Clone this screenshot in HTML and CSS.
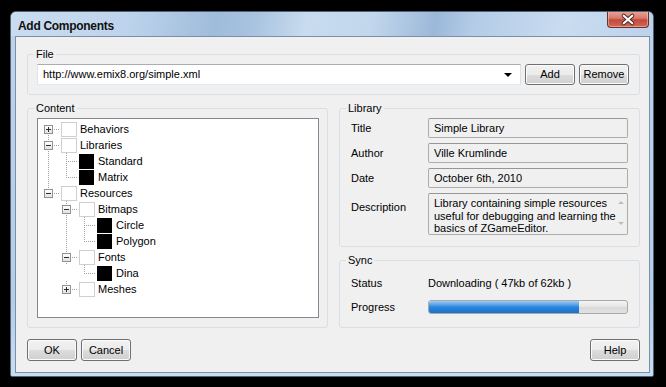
FILE: index.html
```html
<!DOCTYPE html>
<html lang="en">
<head>
    <meta charset="UTF-8">
    <title>Add Components</title>
    <link rel="stylesheet" href="styles.css">
</head>
<body>

    <div class="window">
        <div class="titlebar">
            <span class="title">Add Components</span>
            <button class="close" title="Close">
                <svg width="42" height="17" viewBox="0 0 42 17">
                    <path d="M16.5 4.5 L25.5 12.5 M25.5 4.5 L16.5 12.5" stroke="#4a2a28" stroke-width="4.2" stroke-linecap="round"/>
                    <path d="M16.5 4.5 L25.5 12.5 M25.5 4.5 L16.5 12.5" stroke="#ffffff" stroke-width="2.2" stroke-linecap="round"/>
                </svg>
            </button>
        </div>

        <div class="client">
            <fieldset class="group">
                <legend>File</legend>
                <div class="file-row">
                    <div class="combo">
                        <span class="combo-text">http://www.emix8.org/simple.xml</span>
                        <span class="combo-arrow"></span>
                    </div>
                    <button class="btn">Add</button>
                    <button class="btn">Remove</button>
                </div>
            </fieldset>

            <div class="columns">
                <fieldset class="group">
                    <legend>Content</legend>
                    <div class="content-body">
                        <div class="tree">
                            <div class="node"><span class="ln ln-f"><i class="exp plus"></i></span><span class="icon empty"></span><span class="label">Behaviors</span></div>
                            <div class="node"><span class="ln ln-t"><i class="exp"></i></span><span class="icon empty"></span><span class="label">Libraries</span></div>
                            <div class="node"><span class="ind ln-v"></span><span class="ln ln-t"></span><span class="icon filled"></span><span class="label">Standard</span></div>
                            <div class="node"><span class="ind ln-v"></span><span class="ln ln-l"></span><span class="icon filled"></span><span class="label">Matrix</span></div>
                            <div class="node"><span class="ln ln-l"><i class="exp"></i></span><span class="icon empty"></span><span class="label">Resources</span></div>
                            <div class="node"><span class="ind"></span><span class="ln ln-t"><i class="exp"></i></span><span class="icon empty"></span><span class="label">Bitmaps</span></div>
                            <div class="node"><span class="ind"></span><span class="ind ln-v"></span><span class="ln ln-t"></span><span class="icon filled"></span><span class="label">Circle</span></div>
                            <div class="node"><span class="ind"></span><span class="ind ln-v"></span><span class="ln ln-l"></span><span class="icon filled"></span><span class="label">Polygon</span></div>
                            <div class="node"><span class="ind"></span><span class="ln ln-t"><i class="exp"></i></span><span class="icon empty"></span><span class="label">Fonts</span></div>
                            <div class="node"><span class="ind"></span><span class="ind"></span><span class="ln ln-l"></span><span class="icon filled"></span><span class="label">Dina</span></div>
                            <div class="node"><span class="ind"></span><span class="ln ln-l"><i class="exp plus"></i></span><span class="icon empty"></span><span class="label">Meshes</span></div>
                        </div>
                    </div>
                </fieldset>

                <div class="side">
                    <fieldset class="group">
                        <legend>Library</legend>
                        <div class="props library-props">
                            <span class="prop-name">Title</span>
                            <span class="field">Simple Library</span>
                            <span class="prop-name">Author</span>
                            <span class="field">Ville Krumlinde</span>
                            <span class="prop-name">Date</span>
                            <span class="field">October 6th, 2010</span>
                            <span class="prop-name top">Description</span>
                            <div class="field memo">
                                <span class="memo-text">Library containing simple resources<br>useful for debugging and learning the<br>basics of ZGameEditor.</span>
                                <span class="scroll">
                                    <span class="arrow up"></span>
                                    <span class="arrow down"></span>
                                </span>
                            </div>
                        </div>
                    </fieldset>

                    <fieldset class="group">
                        <legend>Sync</legend>
                        <div class="props sync-props">
                            <span class="prop-name">Status</span>
                            <span class="value">Downloading ( 47kb of 62kb )</span>
                            <span class="prop-name">Progress</span>
                            <div class="progress"><div class="progress-fill" style="width: 75.8%"></div></div>
                        </div>
                    </fieldset>
                </div>
            </div>

            <div class="actions">
                <button class="btn">OK</button>
                <button class="btn">Cancel</button>
                <button class="btn help">Help</button>
            </div>
        </div>
    </div>

</body>
</html>
```

FILE: styles.css
```css
/* Janela estilo Vista basic */
body {
    margin: 0;
    background: #000;
    font-family: "Liberation Sans", Arial, sans-serif;
    font-size: 11px;
    line-height: 13px;
    color: #000;
}
.window {
    width: 644px;
    height: 366px;
    margin: 11px 0 0 10px;
    box-sizing: border-box;
    border: 1px solid #4f6276;
    border-radius: 6px 6px 2px 2px;
    background: linear-gradient(to bottom, #bcd3ec, #b4cde9 80%, #c6ddf2);
    display: flex;
    flex-direction: column;
    overflow: hidden;
}
.titlebar {
    height: 24px;
    flex: none;
    display: flex;
    align-items: flex-start;
    justify-content: space-between;
    background: linear-gradient(100deg, #cadcf0 0%, #bed4ec 18%, #9fbcdb 32%, #a9c3e0 38%, #c8dbef 46%, #c2d7ed 56%, #9cb8d9 66%, #b4cce7 72%, #c9dcf0 86%, #bcd2eb 100%);
}
.title {
    font-weight: bold;
    font-size: 12px;
    line-height: 14px;
    margin: 7px 0 0 7px;
    color: #111;
    letter-spacing: -0.3px;
}
.close {
    width: 42px;
    height: 17px;
    margin: -1px 4px 0 0;
    padding: 0;
    border: 1px solid #6d2f29;
    border-top: none;
    border-radius: 0 0 4px 4px;
    background: linear-gradient(to bottom, #e8a79b 0%, #d77a6b 45%, #c24a3b 55%, #cf6a56 100%);
    box-shadow: inset 0 0 0 1px rgba(255, 220, 210, 0.45);
    display: flex;
    align-items: center;
    justify-content: center;
}
.close svg { display: block; }

.client {
    flex: 1;
    margin: 0 3px 3px 4px;
    border: 1px solid #7c8fa6;
    background: #f0f0f0;
    padding: 11px 9px 10px 11px;
    display: flex;
    flex-direction: column;
}

/* group boxes */
.group {
    margin: 0;
    padding: 0;
    min-width: 0;
    border: 1px solid #d5dfe5;
    border-radius: 3px;
}
.group legend {
    margin-left: 6px;
    padding: 0 2px;
    line-height: 13px;
}

.file-row {
    display: flex;
    gap: 4px;
    padding: 3px 10px 9px 9px;
}
.combo {
    flex: 1;
    height: 21px;
    box-sizing: border-box;
    border: 1px solid #abadb3;
    border-color: #abadb3 #dbdfe6 #e3e9ef #e2e3ea;
    background: #fff;
    display: flex;
    align-items: center;
    padding: 0 8px 0 5px;
}
.combo-text { flex: 1; }
.combo-arrow {
    width: 0;
    height: 0;
    border-left: 4px solid transparent;
    border-right: 4px solid transparent;
    border-top: 4px solid #000;
}

.btn {
    width: 50px;
    height: 21px;
    padding: 0;
    font: inherit;
    color: #000;
    border: 1px solid #707070;
    border-radius: 3px;
    background: linear-gradient(to bottom, #f2f2f2 0%, #ebebeb 50%, #dddddd 50%, #cfcfcf 100%);
    box-shadow: inset 0 0 0 1px #fbfbfb;
}

.columns {
    display: grid;
    grid-template-columns: 1fr 1fr;
    column-gap: 11px;
    margin-top: 7px;
}
.content-body {
    padding: 3px 8px 9px 9px;
}
.tree {
    height: 200px;
    box-sizing: border-box;
    border: 1px solid #828790;
    background: #fff;
    padding-top: 2px;
}
.node {
    display: flex;
    align-items: center;
    height: 16px;
    padding-left: 1px;
}
.ind, .ln {
    flex: none;
    height: 16px;
    display: flex;
    align-items: center;
}
.ind { width: 18px; }
.ln { width: 22px; }

/* linhas pontilhadas da arvore */
.ln-v {
    background: repeating-linear-gradient(to bottom, #a0a0a0 0 1px, transparent 1px 2px) 9px 0 / 1px 100% no-repeat;
}
.ln-t {
    background:
        repeating-linear-gradient(to right, #a0a0a0 0 1px, transparent 1px 2px) 11px 8px / 10px 1px no-repeat,
        repeating-linear-gradient(to bottom, #a0a0a0 0 1px, transparent 1px 2px) 9px 0 / 1px 100% no-repeat;
}
.ln-l {
    background:
        repeating-linear-gradient(to right, #a0a0a0 0 1px, transparent 1px 2px) 11px 8px / 10px 1px no-repeat,
        repeating-linear-gradient(to bottom, #a0a0a0 0 1px, transparent 1px 2px) 9px 0 / 1px 9px no-repeat;
}
.ln-f {
    background:
        repeating-linear-gradient(to right, #a0a0a0 0 1px, transparent 1px 2px) 11px 8px / 10px 1px no-repeat,
        repeating-linear-gradient(to bottom, #a0a0a0 0 1px, transparent 1px 2px) 9px 8px / 1px 8px no-repeat;
}
.exp {
    width: 9px;
    height: 9px;
    box-sizing: border-box;
    margin-left: 5px;
    border: 1px solid #919191;
    background:
        linear-gradient(#2b2b2b, #2b2b2b) center / 5px 1px no-repeat,
        linear-gradient(to bottom, #ffffff, #e2e2e2);
}
.exp.plus {
    background:
        linear-gradient(#2b2b2b, #2b2b2b) center / 5px 1px no-repeat,
        linear-gradient(#2b2b2b, #2b2b2b) center / 1px 5px no-repeat,
        linear-gradient(to bottom, #ffffff, #e2e2e2);
}
.icon {
    flex: none;
    width: 16px;
    height: 15px;
    box-sizing: border-box;
}
.icon.empty { border: 1px solid #cfcfcf; background: #fff; }
.icon.filled { background: #000; width: 15px; margin-right: 1px; }
.label { margin-left: 3px; white-space: nowrap; }

/* painel direito */
.side {
    display: flex;
    flex-direction: column;
    gap: 7px;
}
.props {
    display: grid;
    grid-template-columns: 77px 200px;
    row-gap: 5px;
    align-items: center;
    padding: 3px 11px 11px 11px;
}
.library-props { grid-template-rows: 20px 20px 20px 42px; }
.prop-name.top { align-self: start; margin-top: 8px; }
.field {
    height: 20px;
    box-sizing: border-box;
    border: 1px solid #adadad;
    border-top-color: #969696;
    border-radius: 2px;
    background: #f0f0f0;
    padding: 0 5px;
    line-height: 18px;
    white-space: nowrap;
    overflow: hidden;
}
.field.memo {
    height: 42px;
    display: flex;
    padding: 3px 0 0 5px;
    line-height: 12.5px;
}
.memo-text { flex: 1; }
.scroll {
    width: 16px;
    display: flex;
    flex-direction: column;
    justify-content: space-between;
    align-items: center;
    padding: 4px 0 9px;
}
.arrow {
    width: 0;
    height: 0;
    border-left: 3px solid transparent;
    border-right: 3px solid transparent;
}
.arrow.up { border-bottom: 3px solid #bdbdbd; }
.arrow.down { border-top: 3px solid #bdbdbd; }

.sync-props {
    grid-template-rows: 20px 20px;
    padding: 6px 11px 10px 11px;
    row-gap: 4px;
}
.progress {
    height: 14px;
    box-sizing: border-box;
    border: 1px solid #a9a9a9;
    border-radius: 3px;
    background: linear-gradient(to bottom, #f4f4f4 0%, #e6e6e6 50%, #d9d9d9 51%, #e2e2e2 100%);
    overflow: hidden;
}
.progress-fill {
    height: 100%;
    background: linear-gradient(to bottom, #9ccbf4 0%, #5aa6eb 30%, #2a86dc 50%, #1c72cb 100%);
}

.actions {
    display: flex;
    gap: 4px;
    margin-top: 11px;
}
.actions .btn { height: 22px; }
.actions .help { margin-left: auto; }
```
